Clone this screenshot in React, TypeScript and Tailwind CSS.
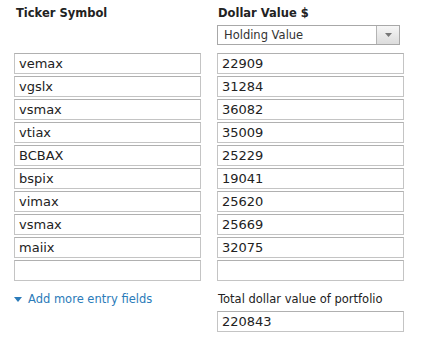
const rows = [
  { ticker: "vemax", value: "22909" },
  { ticker: "vgslx", value: "31284" },
  { ticker: "vsmax", value: "36082" },
  { ticker: "vtiax", value: "35009" },
  { ticker: "BCBAX", value: "25229" },
  { ticker: "bspix", value: "19041" },
  { ticker: "vimax", value: "25620" },
  { ticker: "vsmax", value: "25669" },
  { ticker: "maiix", value: "32075" },
  { ticker: "", value: "" },
];

function Field({ value }: { value: string }) {
  return (
    <div className="h-[21px] w-[187px] border border-[#c4c4c4] border-t-[#b0b0b0] bg-white pl-[4px] text-[13px] leading-[19px] text-[#222]">
      {value}
    </div>
  );
}

export default function App() {
  return (
    <div
      className="w-[423px] h-[342px] bg-white"
      style={{ fontFamily: '"DejaVu Sans", Verdana, sans-serif' }}
    >
      <div className="flex gap-[16px] pl-[14px] pt-[5px]">
        <div className="flex flex-col w-[187px]">
          <div className="h-[16px] pl-[2px] text-[11.5px] font-bold leading-[16px] text-[#222]">Ticker Symbol</div>
          <div className="h-[20px] mt-[4px]" />
          <div className="mt-[8px] flex flex-col gap-[2px]">
            {rows.map((r, i) => (
              <Field key={i} value={r.ticker} />
            ))}
          </div>
          <div className="mt-[10px] flex items-center gap-[6px] whitespace-nowrap text-[11.5px] leading-[16px] text-[#2b7bb9]">
            <svg width="8" height="5" viewBox="0 0 8 5">
              <path d="M0 0 L8 0 L4 5 Z" fill="#2b7bb9" />
            </svg>
            <span>Add more entry fields</span>
          </div>
        </div>
        <div className="flex flex-col w-[187px]">
          <div className="h-[16px] pl-[1px] text-[11.5px] font-bold leading-[16px] text-[#222]">Dollar Value $</div>
          <div className="mt-[4px] flex h-[20px] w-[183px] border border-[#a8a8a8] bg-white">
            <div className="flex-1 pl-[6px] text-[11.5px] leading-[18px] text-[#333]">Holding Value</div>
            <div className="flex w-[23px] items-center justify-center border-l border-[#b4b4b4] bg-gradient-to-b from-[#f6f6f6] to-[#dcdcdc]">
              <svg width="7" height="4" viewBox="0 0 7 4">
                <path d="M0 0 L7 0 L3.5 4 Z" fill="#777" />
              </svg>
            </div>
          </div>
          <div className="mt-[8px] flex flex-col gap-[2px]">
            {rows.map((r, i) => (
              <Field key={i} value={r.value} />
            ))}
          </div>
          <div className="mt-[10px] whitespace-nowrap pl-[1px] text-[11.5px] leading-[16px] text-[#222]">Total dollar value of portfolio</div>
          <div className="mt-[4px]">
            <Field value="220843" />
          </div>
        </div>
      </div>
    </div>
  );
}
